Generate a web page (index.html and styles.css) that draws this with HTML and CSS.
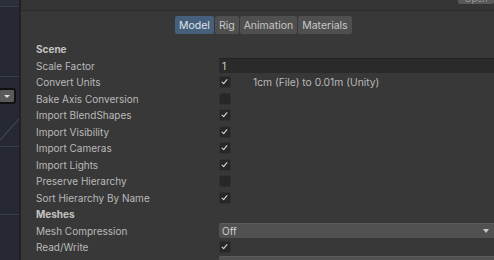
FILE: index.html
```html
<!DOCTYPE html>
<html>
<head>
  <title>Model Import Settings</title>
  <link rel="stylesheet" href="styles.css">
</head>
<body>
  <div class="sidebar">
    <div class="side-row side-top"></div>
    <div class="side-row side-a"></div>
    <div class="side-row side-b">
      <div class="side-drop"><span class="arrow"></span></div>
      <svg class="curve" width="19" height="69" viewBox="0 0 19 69"><line x1="0" y1="63" x2="19" y2="42" stroke="#4c515c" stroke-width="1"/></svg>
    </div>
    <div class="side-row side-d"></div>
    <div class="side-row side-e"></div>
  </div>
  <div class="inspector">
    <div class="topbar">
      <button class="open-btn">Open</button>
    </div>
    <div class="tabs">
      <button class="tab active">Model</button>
      <button class="tab">Rig</button>
      <button class="tab">Animation</button>
      <button class="tab">Materials</button>
    </div>
    <div class="settings">
      <div class="header">Scene</div>
      <div class="row"><label>Scale Factor</label><div class="field">1</div></div>
      <div class="row"><label>Convert Units</label><span class="check on"></span><span class="note">1cm (File) to 0.01m (Unity)</span></div>
      <div class="row"><label>Bake Axis Conversion</label><span class="check"></span></div>
      <div class="row"><label>Import BlendShapes</label><span class="check on"></span></div>
      <div class="row"><label>Import Visibility</label><span class="check on"></span></div>
      <div class="row"><label>Import Cameras</label><span class="check on"></span></div>
      <div class="row"><label>Import Lights</label><span class="check on"></span></div>
      <div class="row"><label>Preserve Hierarchy</label><span class="check"></span></div>
      <div class="row"><label>Sort Hierarchy By Name</label><span class="check on"></span></div>
      <div class="header">Meshes</div>
      <div class="row"><label>Mesh Compression</label><div class="dropdown">Off<span class="arrow"></span></div></div>
      <div class="row"><label>Read/Write</label><span class="check on"></span></div>
      <div class="row"><label>Optimize Mesh</label><div class="dropdown">Everything<span class="arrow"></span></div></div>
    </div>
  </div>
</body>
</html>
```
FILE: styles.css
```css
html, body {
  margin: 0;
  padding: 0;
  height: 100%;
  overflow: hidden;
}
body {
  display: flex;
  background-color: #383838;
  font-family: Inter, "Noto Sans", sans-serif;
  font-size: 10px;
  color: #bababa;
}
.sidebar {
  width: 19px;
  flex-shrink: 0;
  background-color: #262932;
  border-right: 2px solid #1f2127;
  display: flex;
  flex-direction: column;
}
.side-row {
  border-bottom: 1px solid #3a3e48;
}
.side-top {
  height: 6px;
  background-color: #2c2f37;
}
.side-a {
  height: 69px;
}
.side-b {
  height: 69px;
  position: relative;
}
.side-drop {
  position: absolute;
  left: -2px;
  top: 11px;
  width: 14px;
  height: 12px;
  background-color: #5a5a5a;
  border: 2px solid #111;
  border-radius: 3px;
  display: flex;
  align-items: center;
  justify-content: center;
}
.side-drop .arrow {
  border-top: 3px solid #ddd;
  border-left: 3px solid transparent;
  border-right: 3px solid transparent;
}
.curve {
  display: block;
}
.side-d {
  height: 67px;
}
.side-e {
  flex: 1;
  border-bottom: none;
}
.inspector {
  flex: 1;
  min-width: 0;
}
.topbar {
  height: 10px;
  background-color: #353535;
  border-bottom: 1px solid #2b2b2b;
  display: flex;
  justify-content: flex-end;
  align-items: flex-end;
}
.open-btn {
  margin: 0 0 6px 0;
  width: 36px;
  height: 10px;
  padding: 0;
  border: none;
  border-radius: 2px;
  background-color: #585858;
  color: #999;
  font-family: inherit;
  font-size: 9px;
  line-height: 10px;
}
.tabs {
  display: flex;
  padding: 5px 0 0 154px;
  height: 18px;
}
.tab {
  height: 18px;
  padding: 0 4px;
  margin: 0 1px 0 0;
  border: none;
  border-radius: 2px;
  background-color: #4f4f4f;
  color: #c8c8c8;
  font-family: inherit;
  font-size: 10.5px;
}
.tab.active {
  background-color: #46607c;
  color: #dde3eb;
}
.settings {
  padding: 7px 0 0 15px;
}
.header {
  height: 16.5px;
  line-height: 16.5px;
  font-weight: bold;
  color: #c4c4c4;
}
.row {
  display: flex;
  align-items: center;
  height: 16.5px;
}
.row label {
  width: 183px;
  flex-shrink: 0;
  white-space: nowrap;
}
.field {
  flex: 1;
  height: 14px;
  line-height: 14px;
  padding-left: 3px;
  background-color: #2a2a2a;
  border-top: 1px solid #222;
  color: #d0d0d0;
}
.check {
  width: 10px;
  height: 10px;
  background-color: #272727;
  border: 1px solid #303030;
  border-radius: 2px;
  position: relative;
}
.check.on::after {
  content: "";
  position: absolute;
  left: 3px;
  top: 1px;
  width: 2px;
  height: 5px;
  border-right: 1.5px solid #e0e0e0;
  border-bottom: 1.5px solid #e0e0e0;
  transform: rotate(40deg);
}
.note {
  margin-left: 22px;
  color: #b8b8b8;
  font-size: 10.3px;
}
.dropdown {
  flex: 1;
  height: 14px;
  line-height: 14px;
  padding-left: 3px;
  background-color: #515151;
  border-top: 1px solid #5c5c5c;
  border-radius: 2px 0 0 2px;
  color: #d0d0d0;
  display: flex;
  justify-content: space-between;
  align-items: center;
}
.dropdown .arrow {
  margin-right: 5px;
  border-top: 4px solid #c8c8c8;
  border-left: 3px solid transparent;
  border-right: 3px solid transparent;
}
```
